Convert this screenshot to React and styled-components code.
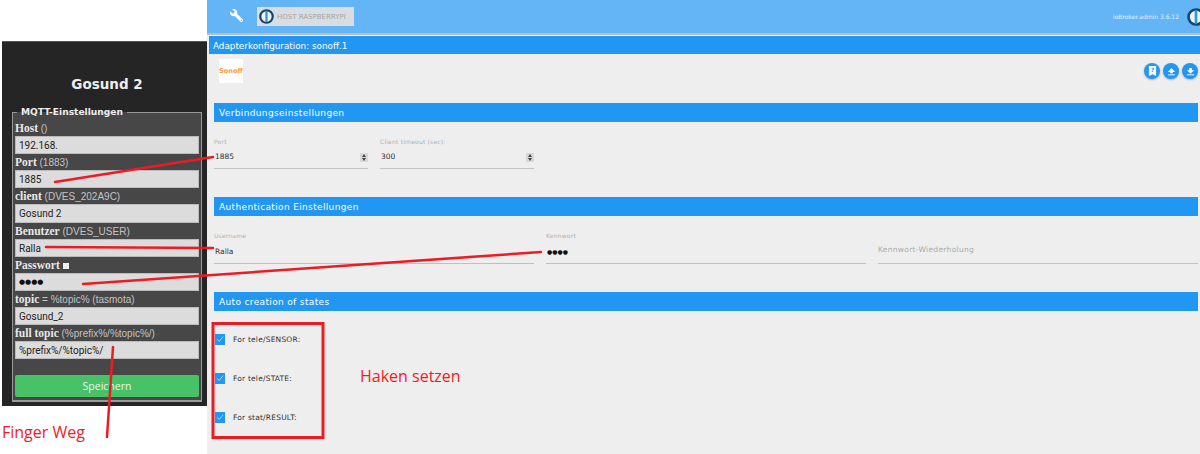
import React from "react";
import styled, { createGlobalStyle } from "styled-components";
import { FaWrench } from "react-icons/fa";

const Global = createGlobalStyle`
  html, body { margin: 0; padding: 0; background: #fff; }
  body { width: 1200px; height: 454px; overflow: hidden; font-family: "DejaVu Sans", sans-serif; }
`;
const Page = styled.div`position: relative; display: flex; width: 1200px; height: 454px; overflow: hidden;`;
const LeftCol = styled.div`width: 207px; flex: none; padding: 41px 0 0 2px; box-sizing: border-box;`;
const Panel = styled.div`
  height: 365px; box-sizing: border-box; background: #252525; padding: 29px 5px 5px 10px;
  border-top: 1px solid #555; display: flex; flex-direction: column;
`;
const Title = styled.h2`
  margin: 0; height: 35px; flex: none; color: #eee; font: bold 13.5px/26px "DejaVu Sans", sans-serif; text-align: center;
`;
const Fieldset = styled.fieldset`
  margin: 0; flex: 1; min-width: 0; border: 1px solid #999; border-bottom-width: 2px; background: #474747; padding: 2px 2px 3px 2px;
  display: flex; flex-direction: column; position: relative;
`;
const Legend = styled.legend`
  color: #eee; font: bold 9.1px/12px "DejaVu Sans", sans-serif; padding: 0 4px; margin-left: 2px;
`;
const FieldLabel = styled.div`
  height: 16px; color: #c4c4c4; font: 10px/17px "Liberation Sans", sans-serif; white-space: nowrap;
  b { color: #e8e8e8; font: bold 11.5px/17px "Liberation Serif", serif; }
`;
const Tick = styled.span`display: inline-block; width: 6px; height: 6px; background: #eee; margin-left: 3px;`;
const TextBox = styled.div`
  height: 18.2px; box-sizing: border-box; background: #dcdcdc; border: 1px solid #bbb; color: #222;
  font: 10px/17px Roboto, sans-serif; padding-left: 3px;
`;
const Dots = styled(TextBox)`font: 7px/17px "DejaVu Sans", sans-serif; color: #111;`;
const SaveButton = styled.div`
  margin-top: 16px; height: 22px; background: #47c266; border-radius: 2px; color: #f2f2f2; text-align: center;
  font: 10.5px/22px "Open Sans", sans-serif;
`;

const RightCol = styled.div`flex: 1; min-width: 0; display: flex; flex-direction: column; background: #eee;`;
const Header = styled.header`
  height: 33px; flex: none; background: #64b5f6; display: flex; align-items: center; padding-left: 21px; color: #fff;
  border-bottom: 2px solid #bbb; box-sizing: content-box;
`;
const WrenchWrap = styled.div`width: 15px; height: 15px; display: flex; margin-right: 14px; transform: scaleX(-1);`;
const HostBadge = styled.div`
  width: 97px; height: 18.5px; background: #d8dde1; display: flex; align-items: center; gap: 3px;
  color: #a6a6a6; font: 7px/18px "DejaVu Sans", sans-serif; padding-left: 2px; box-sizing: border-box; white-space: nowrap;
`;
const Version = styled.div`
  margin-left: auto; color: #e3f2fd; font: 6px/12px "DejaVu Sans", sans-serif; margin-right: 8px; white-space: nowrap;
`;
const CornerLogo = styled.div`width: 13px; height: 18px; overflow: hidden; flex: none;`;
const AdapterBar = styled.div`
  margin: 1px 0 0 2px; height: 18px; flex: none; background: #2196f3; color: #fff;
  font: 8.8px/20px "DejaVu Sans", sans-serif; padding-left: 4px;
`;
const LogoRow = styled.div`display: flex; align-items: flex-start; height: 44px; flex: none; padding: 5px 2px 0 12px;`;
const LogoTile = styled.div`
  width: 24px; height: 24px; background: #fff; color: #f9a03f; font: bold 6.6px/24px "DejaVu Sans", sans-serif; text-align: center;
`;
const ActionGroup = styled.div`display: flex; gap: 3px; margin-left: auto; margin-top: 4px;`;
const RoundButton = styled.div`
  width: 16px; height: 16px; border-radius: 50%; background: #2196f3; display: flex; align-items: center; justify-content: center;
  box-shadow: 0 1px 2px rgba(0,0,0,.25);
`;
const Content = styled.div`padding: 0 2px 0 7px; display: flex; flex-direction: column;`;
const SectionBar = styled.div`
  height: 19px; background: #2196f3; color: #fff; font: 9px/20px "DejaVu Sans", sans-serif; letter-spacing: 0.35px; padding-left: 5px;
`;
const FieldRow = styled.div`display: flex; gap: 12px; height: ${p => p.$h}px; padding-top: 14px; box-sizing: border-box;`;
const Field = styled.div`
  width: ${p => p.$w}px; height: ${p => p.$fh || 32}px; border-bottom: 1px solid ${p => p.$line || "#c4c4c4"}; display: flex; flex-direction: column;
`;
const TinyLabel = styled.div`height: ${p => p.$h || 14}px; flex: none; font: 6px/12px "DejaVu Sans", sans-serif; color: #b0b0b0; letter-spacing: 0.2px; white-space: nowrap;`;
const Value = styled.div`
  display: flex; align-items: center; justify-content: space-between; color: #333; font: 7.5px/14px "DejaVu Sans", sans-serif; padding-left: 1px;
`;
const PwDots = styled.div`color: #111; font: 6px/14px "DejaVu Sans", sans-serif; padding-left: 1px;`;
const Placeholder = styled.div`margin-top: 13px; color: #aaa; font: 7.5px/14px "DejaVu Sans", sans-serif; letter-spacing: 0.3px;`;
const Spinner = styled.div`
  width: 8px; height: 9px; background: #d8d8d8; display: flex; flex-direction: column; align-items: center; justify-content: center; gap: 1px;
  &::before, &::after { content: ""; border-left: 2px solid transparent; border-right: 2px solid transparent; }
  &::before { border-bottom: 3px solid #444; }
  &::after { border-top: 3px solid #444; }
`;
const Checks = styled.div`display: flex; flex-direction: column; padding: 23px 0 0 1px; gap: 28.5px;`;
const CheckRow = styled.div`display: flex; align-items: center; height: 10.5px; color: #333; font: 7.5px/11px "DejaVu Sans", sans-serif; letter-spacing: 0.2px;`;
const CheckBox = styled.div`width: 10px; height: 11px; background: #2196f3; margin-right: 8px; display: flex; align-items: center; justify-content: center;`;
const Overlay = styled.svg`position: absolute; left: 0; top: 0; pointer-events: none;`;
const Note = styled.div`
  position: absolute; left: ${p => p.$x}px; top: ${p => p.$y}px; color: #ed1c24; font: 16px/22px "Open Sans", sans-serif; white-space: nowrap;
`;

const IoLogo = ({ size = 16 }) => (
  <svg width={size} height={size} viewBox="0 0 24 24">
    <circle cx="12" cy="12" r="10" fill="#eef3f6" stroke="#16456e" strokeWidth="3.5" />
    <rect x="10.2" y="3" width="3.6" height="18" fill="#3399cc" />
  </svg>
);
const Arrow = ({ up }) => (
  <svg width="9" height="9" viewBox="0 0 10 10" fill="#fff">
    <path d={up ? "M5 1 9 5.5H6.5V7h-3V5.5H1z" : "M3.5 1h3v2.5H9L5 7.5 1 3.5h2.5z"} />
    <rect x="1" y="8.2" width="8" height="1" />
  </svg>
);
const Check = () => (
  <svg width="8" height="8" viewBox="0 0 10 10" fill="none" stroke="#cfe8fc" strokeWidth="1">
    <path d="M1.5 5.5 4 8l5-6" />
  </svg>
);

const mqtt = [
  [<b>Host</b>, " ()", "192.168."],
  [<b>Port</b>, " (1883)", "1885"],
  [<b>client</b>, " (DVES_202A9C)", "Gosund 2"],
  [<b>Benutzer</b>, " (DVES_USER)", "Ralla"],
];

export default function App() {
  return (
    <Page>
      <Global />
      <LeftCol>
        <Panel>
          <Title>Gosund 2</Title>
          <Fieldset>
            <Legend>MQTT-Einstellungen</Legend>
            {mqtt.map(([l, s, v], i) => (
              <React.Fragment key={i}>
                <FieldLabel>{l}{s}</FieldLabel>
                <TextBox>{v}</TextBox>
              </React.Fragment>
            ))}
            <FieldLabel><b>Passwort</b><Tick /></FieldLabel>
            <Dots>●●●●</Dots>
            <FieldLabel><b>topic</b> = %topic% (tasmota)</FieldLabel>
            <TextBox>Gosund_2</TextBox>
            <FieldLabel><b>full topic</b> (%prefix%/%topic%/)</FieldLabel>
            <TextBox>%prefix%/%topic%/</TextBox>
            <SaveButton>Speichern</SaveButton>
          </Fieldset>
        </Panel>
      </LeftCol>
      <RightCol>
        <Header>
          <WrenchWrap><FaWrench size={13} color="#fff" /></WrenchWrap>
          <HostBadge><IoLogo size={15} />HOST RASPBERRYPI</HostBadge>
          <Version>ioBroker.admin 3.6.12</Version>
          <CornerLogo><IoLogo size={18} /></CornerLogo>
        </Header>
        <AdapterBar>Adapterkonfiguration: sonoff.1</AdapterBar>
        <LogoRow>
          <LogoTile>Sonoff</LogoTile>
          <ActionGroup>
            <RoundButton>
              <svg width="9" height="10" viewBox="0 0 10 11"><path d="M1 0h8v11l-4-2-4 2z" fill="#fff" /><text x="5" y="7" fontSize="6.5" fontWeight="700" textAnchor="middle" fill="#2196f3">?</text></svg>
            </RoundButton>
            <RoundButton><Arrow up /></RoundButton>
            <RoundButton><Arrow /></RoundButton>
          </ActionGroup>
        </LogoRow>
        <Content>
          <SectionBar>Verbindungseinstellungen</SectionBar>
          <FieldRow $h={75}>
            <Field $w={154}>
              <TinyLabel>Port</TinyLabel>
              <Value>1885<Spinner /></Value>
            </Field>
            <Field $w={154}>
              <TinyLabel>Client timeout (sec):</TinyLabel>
              <Value>300<Spinner /></Value>
            </Field>
          </FieldRow>
          <SectionBar>Authentication Einstellungen</SectionBar>
          <FieldRow $h={76}>
            <Field $w={320} $fh={33} $line="#c8c0ac">
              <TinyLabel $h={15}>Username</TinyLabel>
              <Value>Ralla</Value>
            </Field>
            <Field $w={320} $fh={33} $line="#c8c0ac">
              <TinyLabel $h={15}>Kennwort</TinyLabel>
              <PwDots>●●●●</PwDots>
            </Field>
            <Field $w={320} $fh={33}>
              <Placeholder>Kennwort-Wiederholung</Placeholder>
            </Field>
          </FieldRow>
          <SectionBar>Auto creation of states</SectionBar>
          <Checks>
            <CheckRow><CheckBox><Check /></CheckBox>For tele/SENSOR:</CheckRow>
            <CheckRow><CheckBox><Check /></CheckBox>For tele/STATE:</CheckRow>
            <CheckRow><CheckBox><Check /></CheckBox>For stat/RESULT:</CheckRow>
          </Checks>
        </Content>
      </RightCol>
      <Overlay width="1200" height="454" viewBox="0 0 1200 454">
        <g stroke="#ed1c24" strokeWidth="2.5" fill="none" strokeLinecap="round">
          <path d="M55 182 213 157" />
          <path d="M46 247 213 248" />
          <path d="M83 284 541 252" />
          <path d="M113 347 107 437" />
          <rect x="213" y="323.5" width="110" height="114" strokeWidth="3" strokeLinecap="butt" />
        </g>
      </Overlay>
      <Note $x={360} $y={365}>Haken setzen</Note>
      <Note $x={2} $y={421}>Finger Weg</Note>
    </Page>
  );
}
